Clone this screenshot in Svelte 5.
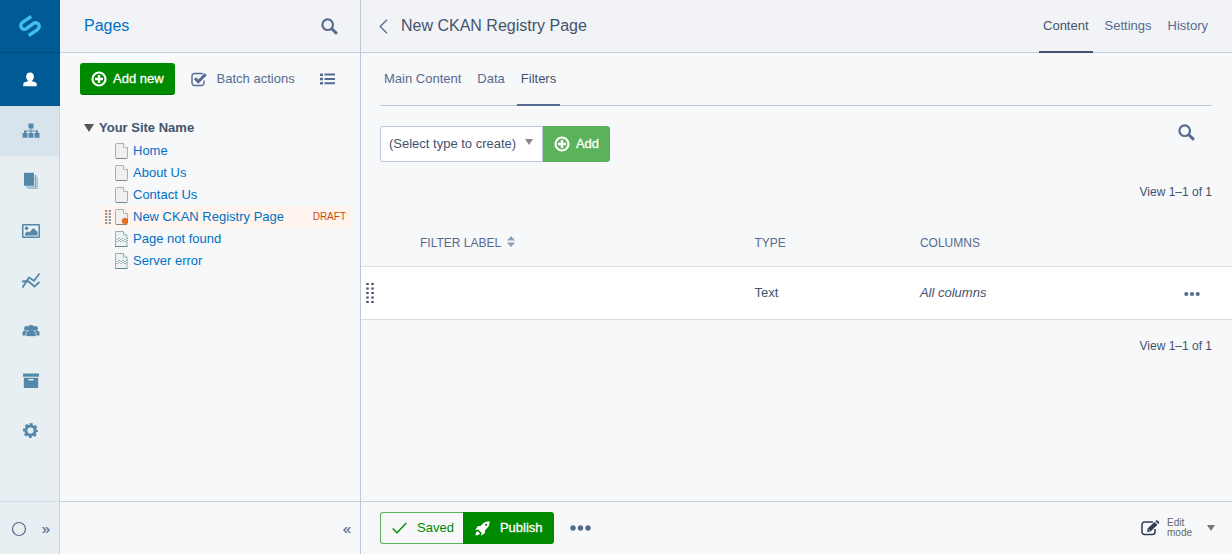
<script>
  const menu = ['Pages', 'Files', 'Images', 'Reports', 'Security', 'Archive', 'Settings'];
  const pages = [
    { title: 'Home', kind: 'page' },
    { title: 'About Us', kind: 'page' },
    { title: 'Contact Us', kind: 'page' },
    { title: 'New CKAN Registry Page', kind: 'page', draft: true },
    { title: 'Page not found', kind: 'error' },
    { title: 'Server error', kind: 'error' }
  ];
  const sections = ['Content', 'Settings', 'History'];
  const tabs = ['Main Content', 'Data', 'Filters'];
</script>

{#snippet search()}
  <svg width="17" height="17" viewBox="0 0 17 17" aria-hidden="true">
    <circle cx="6.7" cy="6.7" r="5.3" fill="none" stroke="currentColor" stroke-width="2.2" />
    <path d="M11 11l4 3.800" fill="none" stroke="currentColor" stroke-width="3" stroke-linecap="round" />
  </svg>
{/snippet}

{#snippet plus()}
  <svg width="16" height="16" viewBox="0 0 16 16" aria-hidden="true">
    <circle cx="8" cy="8" r="6.500" fill="none" stroke="currentColor" stroke-width="2.200" />
    <path d="M8 4v8M4 8h8" stroke="currentColor" stroke-width="2.400" />
  </svg>
{/snippet}

{#snippet dots(size)}
  <svg width={size} height="6" viewBox="0 0 21 6" aria-hidden="true">
    <circle cx="3" cy="3" r="2.7" fill="currentColor" />
    <circle cx="10.5" cy="3" r="2.7" fill="currentColor" />
    <circle cx="18" cy="3" r="2.7" fill="currentColor" />
  </svg>
{/snippet}

{#snippet menuIcon(name)}
  <svg width="18" height="18" viewBox="0 0 18 18" fill="currentColor" aria-hidden="true">
    {#if name === 'Pages'}
      <path d="M6.500 1.500h5v5h-2v2h6.500V11h1.500v4.800h-5V11H14V9.500H9.500V11h2v4.800h-5V11h2V9.500H4V11h1.500v4.800h-5V11H2V8.500h6.500v-2h-2z" />
    {:else if name === 'Files'}
      <path d="M2 .8h10v13H2z" />
      <path d="M12.800 3h1.500v12.500H4v-1h8.800z" opacity=".75" />
      <path d="M14.800 5h1v12H6v-1h8.800z" opacity=".5" />
    {:else if name === 'Images'}
      <path d="M1 2h16a1 1 0 0 1 1 1v12a1 1 0 0 1-1 1H1a1 1 0 0 1-1-1V3a1 1 0 0 1 1-1zM1.500 3.500v11h15v-11z" fill-rule="evenodd" />
      <circle cx="4.600" cy="6.300" r="1.700" />
      <path d="M3 13.500v-2l2.500-2.300 1.500 1.300 4.500-4.500L15.500 10v3.500z" />
    {:else if name === 'Reports'}
      <g fill="none" stroke="currentColor" stroke-width="1.800">
        <path d="M.5 15.500L7 5.500l5 3.200L17.500 1.500" />
        <path d="M0 9.500l6-.5 6.500 5.500 5-4.500" />
      </g>
    {:else if name === 'Security'}
      <circle cx="4.300" cy="6.300" r="2.200" />
      <circle cx="13.700" cy="6.300" r="2.200" />
      <path d="M.5 13.500V11q0-2.500 2.500-2.500h12q2.500 0 2.500 2.500v2.500z" />
      <path d="M4 14.500v-2Q4 8 9 8t5 4.500v2z" stroke="#e8eff3" stroke-width=".7" />
      <circle cx="9" cy="6.200" r="3.200" />
    {:else if name === 'Archive'}
      <path d="M1 1.500h16v3.200H1z" />
      <path d="M1.800 5.700h14.400v9.500a.8.800 0 0 1-.8.800H2.600a.8.800 0 0 1-.8-.8zM6.500 7v1.500h5V7z" fill-rule="evenodd" />
    {:else}
      <circle cx="8.500" cy="8.500" r="4.600" fill="none" stroke="currentColor" stroke-width="3" />
      <circle cx="8.500" cy="8.500" r="6.400" fill="none" stroke="currentColor" stroke-width="2.200" stroke-dasharray="2.900 2.126" stroke-dashoffset="1.450" />
    {/if}
  </svg>
{/snippet}

<div class="app">
  <nav class="menu" aria-label="Main">
    <a class="brand" href="#home" aria-label="Home">
      <svg width="24" height="24" viewBox="0 0 24 24" fill="none" stroke="#3fbdf0" stroke-width="3.400" aria-hidden="true">
        <path d="M13.300 2.500L5.200 7.900C.4 11.300 3.800 17.200 8.300 14.700L15.700 9.300C20.200 6.800 23.600 12.700 18.800 16.100L10.700 21.500" />
      </svg>
    </a>
    <a class="profile" href="#profile" aria-label="Profile">
      <svg width="14" height="15" viewBox="0 0 14 15" fill="#fff" aria-hidden="true">
        <path d="M7 .5c2.600 0 3.900 1.800 3.900 4.100 0 1.700-.7 3.200-1.700 4v.6l3.300 1Q13.700 10.700 13.700 12v2.300H.3V12q0-1.300 1.200-1.800l3.300-1v-.6c-1-.8-1.700-2.300-1.700-4C3.100 2.300 4.400.5 7 .5z" />
      </svg>
    </a>
    <ul>
      {#each menu as name, i}
        <li><a href="#{name}" class:current={i === 0} aria-label={name}>{@render menuIcon(name)}</a></li>
      {/each}
    </ul>
    <div class="menu-foot">
      <button aria-label="Status">
        <svg width="16" height="16" viewBox="0 0 16 16" aria-hidden="true"><circle cx="8" cy="8" r="6.500" fill="none" stroke="currentColor" stroke-width="1.200" /></svg>
      </button>
      <button class="chevrons" aria-label="Expand menu">»</button>
    </div>
  </nav>

  <aside class="tree-panel">
    <header class="bar">
      <h1><a href="#pages">Pages</a></h1>
      <button class="icon" aria-label="Search pages">{@render search()}</button>
    </header>
    <div class="tree-body">
      <div class="tools">
        <button class="green add-new">{@render plus()}<span>Add new</span></button>
        <button class="batch">
          <svg width="16" height="15" viewBox="0 0 16 15" fill="none" stroke="currentColor" aria-hidden="true">
            <path d="M13 8.500v2.500a2.500 2.500 0 0 1-2.500 2.500h-7A2.500 2.500 0 0 1 1 11V4a2.500 2.500 0 0 1 2.500-2.500h7q.8 0 1.500.4" stroke-width="1.400" />
            <path d="M4 6.300l3.300 3.300L14.700 2.300" stroke-width="3" />
          </svg>
          <span>Batch actions</span>
        </button>
        <button class="icon" aria-label="List view">
          <svg width="15" height="12" viewBox="0 0 15 12" fill="currentColor" aria-hidden="true">
            <path d="M0 .5h3v2.500H0zM0 4.700h3v2.500H0zM0 9h3v2.500H0zM4.500.5H15v2H4.500zM4.500 4.900H15v2H4.500zM4.500 9.300H15v2H4.500z" />
          </svg>
        </button>
      </div>
      <div class="root">
        <svg width="10" height="8" viewBox="0 0 10 8" aria-hidden="true"><path d="M0 0h10L5 8z" fill="#555" /></svg>
        <strong>Your Site Name</strong>
      </div>
      <ul class="tree">
        {#each pages as page}
          <li class:selected={page.draft}>
            <svg class="grip" width="6" height="14" viewBox="0 0 6 14" aria-hidden="true">
              {#if page.draft}
                <path d="M1.200 0v14M4.800 0v14" stroke="#8d8d8d" stroke-width="2" stroke-dasharray="2 1" />
              {/if}
            </svg>
            <svg width="13" height="16" viewBox="0 0 13 16" aria-hidden="true">
              {#if page.kind === 'page'}
                <path d="M1.500.500h7l4 4v10a1 1 0 0 1-1 1h-10a1 1 0 0 1-1-1v-13a1 1 0 0 1 1-1z" fill="#f0f0f0" stroke="#adadad" />
                <path d="M8.500.500v4h4" fill="#fff" stroke="#b5b5b5" />
                <path d="M1 15.500h11" stroke="#858585" />
                {#if page.draft}
                  <circle cx="10" cy="12" r="2.800" fill="#f0701f" stroke="#c94a08" stroke-width=".6" />
                {/if}
              {:else}
                <path d="M.5.500h8l3.500 3.500v11.500H.5z" fill="#edf3f2" stroke="#9ab0af" />
                <path d="M8.500.500v3.500H12" fill="#fff" stroke="#9ab0af" />
                <path d="M0 15.500h12.500" stroke="#6f8b89" />
                <path d="M0 7l2 2 2-2 2 2 2-2 2 2 2-2 1 1v2l-1-1-2 2-2-2-2 2-2-2-2 2-2-2z" fill="#fff" stroke="#8ca5a4" stroke-width=".8" />
              {/if}
            </svg>
            <a href="#page">{page.title}</a>
            {#if page.draft}<span class="draft">DRAFT</span>{/if}
          </li>
        {/each}
      </ul>
    </div>
    <footer class="tree-foot"><button class="chevrons" aria-label="Collapse panel">«</button></footer>
  </aside>

  <main>
    <header class="bar">
      <a class="back" href="#back" aria-label="Back">
        <svg width="9" height="15" viewBox="0 0 9 15" aria-hidden="true"><path d="M8 .8L1.200 7.500 8 14.200" fill="none" stroke="currentColor" stroke-width="1.300" /></svg>
      </a>
      <h2>New CKAN Registry Page</h2>
      <nav class="sections" aria-label="Sections">
        {#each sections as name, i}<a href="#{name}" class:current={i === 0}>{name}</a>{/each}
      </nav>
    </header>

    <div class="body">
      <nav class="tabs" aria-label="Tabs">
        {#each tabs as name, i}<a href="#{name}" class:current={i === 2}>{name}</a>{/each}
      </nav>
      <div class="create">
        <div class="select">
          <select aria-label="Type to create"><option>(Select type to create)</option></select>
          <svg width="8" height="6" viewBox="0 0 8 6" aria-hidden="true"><path d="M0 0h8L4 6z" fill="#888" /></svg>
        </div>
        <button class="green add">{@render plus()}<span>Add</span></button>
        <button class="icon find" aria-label="Search filters">{@render search()}</button>
      </div>
      <p class="count top">View 1–1 of 1</p>
      <table>
        <thead>
          <tr>
            <th class="handle"></th>
            <th class="label">
              <button>FILTER LABEL
                <svg width="8" height="14" viewBox="0 0 8 14" aria-hidden="true"><path d="M0 4.500L4 0l4 4.500zM0 6.500h8L4 11z" fill="#8f9dbd" /></svg>
              </button>
            </th>
            <th class="type">TYPE</th>
            <th>COLUMNS</th>
            <th class="actions"></th>
          </tr>
        </thead>
        <tbody>
          <tr>
            <td class="handle">
              <svg width="8" height="20" viewBox="0 0 8 20" aria-hidden="true">
                <path d="M1.500 0v20M6.500 0v20" stroke="#3f4a60" stroke-width="2.400" stroke-dasharray="2 2.500" />
              </svg>
            </td>
            <td></td>
            <td>Text</td>
            <td><em>All columns</em></td>
            <td class="actions"><button class="icon" aria-label="Row actions">{@render dots(16)}</button></td>
          </tr>
        </tbody>
      </table>
      <p class="count">View 1–1 of 1</p>
    </div>

    <footer class="main-foot">
      <button class="saved">
        <svg width="15" height="12" viewBox="0 0 15 12" aria-hidden="true"><path d="M.7 6.500l4.300 4.300L14.300 1" fill="none" stroke="currentColor" stroke-width="1.400" /></svg>
        <span>Saved</span>
      </button>
      <button class="green publish">
        <svg width="15" height="15" viewBox="0 0 15 15" fill="currentColor" aria-hidden="true">
          <path d="M14.700.3C10.500.3 8 2 6 4.800L2.700 5.200.3 9l3-.5L6.500 11.700 6 14.700l3.800-2.400.4-3.300C13 7 14.700 4.500 14.700.3zM11.200 2.700a1.100 1.100 0 1 1 0 2.200 1.100 1.100 0 0 1 0-2.200z" fill-rule="evenodd" />
          <path d="M2.500 10L5 12.500 3.500 14 .5 14.500 1 11.500z" />
        </svg>
        <span>Publish</span>
      </button>
      <button class="icon more" aria-label="More options">{@render dots(21)}</button>
      <button class="mode">
        <svg width="19" height="16" viewBox="0 0 19 16" aria-hidden="true">
          <path d="M14 9v3a2.500 2.500 0 0 1-2.500 2.500H3.500A2.500 2.500 0 0 1 1 12V4.500A2.500 2.500 0 0 1 3.500 2H12" fill="none" stroke="#303d55" stroke-width="1.500" />
          <path d="M6.500 8.500L13.500 2l3 2.800L9.500 11.500l-3.300.5zM14.300 1.300l.8-.8q.6-.5 1.200 0l1.700 1.600q.6.600 0 1.200l-.8.800z" fill="#303d55" />
          <path d="M7.500 9.300l1.400 1.300" stroke="#fff" stroke-width=".8" />
        </svg>
        <span>Edit<br />mode</span>
        <svg class="caret" width="8" height="6" viewBox="0 0 8 6" aria-hidden="true"><path d="M0 0h8L4 6z" fill="#777" /></svg>
      </button>
    </footer>
  </main>
</div>

<style>
  :global(body) {
    margin: 0;
    background: #f6f8fa;
  }
  .app {
    display: flex;
    min-height: 100vh;
    font: 13px/20px "Liberation Sans", Arial, sans-serif;
    color: #43536d;
  }
  .app * {
    box-sizing: border-box;
  }
  svg {
    display: block;
    flex: none;
  }
  a {
    color: inherit;
    text-decoration: none;
  }
  button {
    display: flex;
    align-items: center;
    margin: 0;
    padding: 0;
    border: 0;
    background: none;
    font: inherit;
    color: #566b8f;
    cursor: pointer;
  }
  ul {
    margin: 0;
    padding: 0;
    list-style: none;
  }
  h1,
  h2 {
    margin: 0;
    font-size: 16px;
    font-weight: 400;
  }
  h1 {
    color: #0071c4;
  }
  p {
    margin: 0;
  }

  .menu {
    display: flex;
    flex: none;
    flex-direction: column;
    width: 60px;
    background: linear-gradient(to left, #c9d3e0 1px, #e8eff3 1px);
    color: #5488aa;
  }
  .brand,
  .profile,
  .menu li a {
    display: flex;
    align-items: center;
    justify-content: center;
  }
  .brand,
  .profile {
    height: 53px;
    background: #005a93;
  }
  .brand {
    border-bottom: 1px solid #004d7e;
  }
  .menu li a {
    height: 50px;
    margin-right: 1px;
    padding-left: 2px;
  }
  .menu li .current {
    background: #d8e4eb;
  }
  .menu-foot {
    display: flex;
    align-items: center;
    justify-content: space-between;
    height: 53px;
    margin-top: auto;
    padding: 2px 10px 0 11px;
    border-top: 1px solid #d3dfe6;
  }
  .chevrons {
    font-size: 15px;
    -webkit-text-stroke: 0.2px;
  }

  .bar {
    display: flex;
    align-items: center;
    height: 53px;
    border-bottom: 1px solid #c6cfe0;
    background: #f1f3f6;
  }
  .tree-panel {
    display: flex;
    flex: none;
    flex-direction: column;
    width: 301px;
    border-right: 1px solid #bcc7da;
  }
  .tree-panel .bar {
    justify-content: space-between;
    padding: 0 22px 0 24px;
  }
  .tree-body {
    flex: 1;
    padding: 10px 8px 10px 20px;
  }
  .tools {
    display: flex;
    align-items: center;
    padding-right: 17px;
  }
  .green {
    justify-content: center;
    gap: 6px;
    height: 32px;
    border-radius: 3px;
    background: #008a00;
    color: #fff;
    -webkit-text-stroke: 0.3px;
  }
  .add-new {
    padding: 0 11px;
    border-bottom: 1px solid #007000;
  }
  .batch {
    gap: 10px;
    margin: 0 auto 0 16px;
  }
  .root {
    display: flex;
    align-items: center;
    gap: 5px;
    margin-top: 22px;
    padding-left: 4px;
    line-height: 22px;
  }
  .tree {
    padding-top: 1px;
  }
  .tree li {
    display: flex;
    align-items: center;
    gap: 4px;
    height: 22px;
    margin-left: 20px;
    padding-left: 5px;
    color: #0071c4;
  }
  .tree li a {
    padding-left: 1px;
  }
  .selected {
    background: #fff5ee;
  }
  .draft {
    margin-left: auto;
    padding-right: 6px;
    font-size: 10px;
    color: #d0470a;
  }
  .tree-foot {
    display: flex;
    align-items: center;
    justify-content: flex-end;
    height: 53px;
    padding: 2px 9px 0 0;
    border-top: 1px solid #c6cfe0;
  }

  main {
    display: flex;
    flex: 1;
    flex-direction: column;
    min-width: 0;
  }
  main .bar {
    padding: 0 20px 0 18px;
  }
  .back {
    margin-right: 13px;
    color: #566b8f;
  }
  .sections,
  .tabs {
    display: flex;
    gap: 8px;
    color: #566b8f;
  }
  .sections {
    margin-left: auto;
  }
  .sections a,
  .tabs a {
    height: 53px;
    padding: 0 4px;
    line-height: 52px;
    border-bottom: 2px solid transparent;
  }
  .sections .current {
    border-color: #43536d;
    color: #43536d;
  }
  .body {
    flex: 1;
  }
  .tabs {
    height: 53px;
    margin: 0 20px 0 19px;
    border-bottom: 1px solid #bcc7da;
  }
  .tabs .current {
    border-color: #566b8f;
    color: #43536d;
  }
  .create {
    display: flex;
    margin: 20px 37px 0 19px;
  }
  .select {
    position: relative;
  }
  select {
    width: 163px;
    height: 36px;
    padding: 0 8px;
    border: 1px solid #bcc7da;
    border-radius: 3px 0 0 3px;
    appearance: none;
    background: #fff;
    font: inherit;
    color: #43536d;
  }
  .select svg {
    position: absolute;
    top: 13px;
    right: 10px;
    pointer-events: none;
  }
  .add {
    width: 67px;
    height: 36px;
    border-radius: 0 3px 3px 0;
    background: #5ab25a;
  }
  .find {
    align-self: flex-start;
    margin: -2px 0 0 auto;
  }
  .count {
    margin-top: 16px;
    padding-right: 20px;
    font-size: 12px;
    text-align: right;
  }
  .count.top {
    margin-top: 20px;
  }
  table {
    width: 100%;
    margin-top: 16px;
    border-collapse: collapse;
    table-layout: fixed;
  }
  th,
  td {
    padding: 0 20px;
    text-align: left;
  }
  th {
    height: 48px;
    padding-top: 2px;
    font-size: 12px;
    font-weight: 400;
    color: #566b8f;
  }
  th button {
    gap: 6px;
  }
  td {
    height: 53px;
    border: solid #d9dfe6;
    border-width: 1px 0;
    background: #fff;
  }
  .handle {
    width: 39px;
    padding: 0 5px;
  }
  .label {
    width: 38.4%;
  }
  .type {
    width: 19%;
  }
  .actions {
    width: 68px;
    padding: 3px 32px 0 20px;
  }
  .main-foot {
    display: flex;
    align-items: center;
    height: 53px;
    padding: 0 17px 0 19px;
    border-top: 1px solid #c6cfe0;
  }
  .saved {
    gap: 10px;
    height: 32px;
    padding: 0 9px 0 11px;
    border: 1px solid #5ab25a;
    border-right: 0;
    border-radius: 3px 0 0 3px;
    color: #008a00;
  }
  .publish {
    gap: 10px;
    padding: 0 11px 0 12px;
    border-radius: 0 3px 3px 0;
  }
  .more {
    margin-left: 16px;
  }
  .mode {
    gap: 7px;
    margin-left: auto;
    font-size: 10px;
    line-height: 10px;
    text-align: left;
    color: #666;
  }
  .caret {
    margin-left: 8px;
  }
</style>
